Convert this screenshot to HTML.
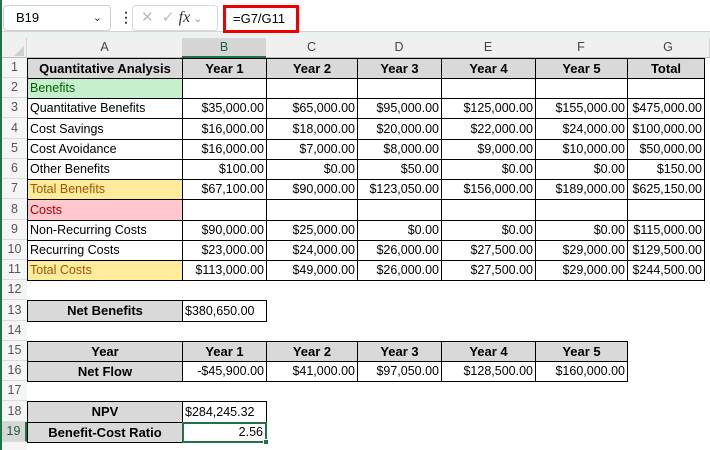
<!DOCTYPE html>
<html><head><meta charset="utf-8"><style>
*{margin:0;padding:0;box-sizing:border-box}
body{width:710px;height:450px;overflow:hidden;background:#fff;font-family:"Liberation Sans",sans-serif;position:relative}
.abs{position:absolute}
.row{position:absolute;left:0;width:710px;height:21px}
.row>div{position:absolute;top:0;height:21px;border:1px solid #000;line-height:19px;font-size:12.5px;padding:0 2px;white-space:nowrap;overflow:hidden;text-align:right;color:#000}
.row>.rh{left:2px;width:25px;border:none;border-bottom:1px solid #dcdcdc;background:#f5f5f5;color:#555;text-align:center;font-size:12.5px;height:20px;padding:0}
.row.t>div{height:22px;line-height:20px}
.row.t>.rh{height:21px}
.a{left:27px;width:156px}.b{left:182px;width:85px}.c{left:266px;width:92px}.d{left:357px;width:85px}.e{left:441px;width:95px}.f{left:535px;width:93px}.g{left:627px;width:78px}
.row>.h{background:#d9d9d9;font-weight:bold;text-align:center;font-size:13px}
.row>.l{text-align:left}
.gr{background:#c6efce;color:#006100!important}
.ye{background:#ffeb9c;color:#9c5700!important}
.pk{background:#ffc7ce;color:#9c0006!important}
.ch{position:absolute;top:38px;height:20px;background:#f0f0f0;border-right:1px solid #d4d4d4;border-bottom:1px solid #bdbdbd;text-align:center;font-size:12.5px;line-height:19px;color:#444}
</style></head><body>
<div class="abs" style="left:0;top:0;width:710px;height:38px;background:#eef1f1"></div>
<div class="abs" style="left:0;top:0;width:710px;height:32px;background:#fff;border-bottom:1px solid #d0d4d4"></div>
<div class="abs" style="left:3px;top:5px;width:108px;height:26px;border:1px solid #d0d0d0;border-radius:4px;font-size:13px;line-height:24px;padding-left:12px">B19<span style="position:absolute;right:8px;top:0;font-size:11px;color:#333">&#8964;</span></div>
<div class="abs" style="left:119px;top:9px;font-size:14px;font-weight:bold;color:#444">&#8942;</div>
<div class="abs" style="left:132px;top:5px;width:86px;height:26px;border:1px solid #d8d8d8;border-radius:4px;font-size:15px;line-height:24px;color:#bbb;padding-left:8px">✕&nbsp;&nbsp;✓&nbsp;<i style="font-family:'Liberation Serif',serif;color:#333;font-size:16px">fx</i><span style="font-size:11px;color:#999"> &#8964;</span></div>
<div class="abs" style="left:223px;top:5px;width:76px;height:28px;border:3px solid #e00;font-size:13px;line-height:22px;padding-left:7px">=G7/G11</div>
<div class="abs" style="left:0;top:0;width:2px;height:450px;background:#217346"></div>
<div class="abs" style="left:2px;top:38px;width:25px;height:20px;background:#f0f0f0;border-bottom:1px solid #bdbdbd;border-right:1px solid #d4d4d4"></div>
<div class="abs" style="left:14px;top:46px;width:0;height:0;border-left:10px solid transparent;border-bottom:10px solid #cfcfcf"></div>
<div class="ch" style="left:27px;width:156px">A</div>
<div class="ch" style="left:182px;width:85px;background:#d6d6d6;border-bottom:2px solid #217346;color:#1e5e3a">B</div>
<div class="ch" style="left:266px;width:92px">C</div>
<div class="ch" style="left:357px;width:85px">D</div>
<div class="ch" style="left:441px;width:95px">E</div>
<div class="ch" style="left:535px;width:93px">F</div>
<div class="ch" style="left:627px;width:83px">G</div>

<div class="row" style="top:58px"><div class="rh">1</div><div class="a h">Quantitative Analysis</div><div class="b h">Year 1</div><div class="c h">Year 2</div><div class="d h">Year 3</div><div class="e h">Year 4</div><div class="f h">Year 5</div><div class="g h">Total</div></div>
<div class="row" style="top:78px"><div class="rh">2</div><div class="a l gr">Benefits</div><div class="b"></div><div class="c"></div><div class="d"></div><div class="e"></div><div class="f"></div><div class="g"></div></div>
<div class="row" style="top:98px"><div class="rh">3</div><div class="a l">Quantitative Benefits</div><div class="b">$35,000.00</div><div class="c">$65,000.00</div><div class="d">$95,000.00</div><div class="e">$125,000.00</div><div class="f">$155,000.00</div><div class="g">$475,000.00</div></div>
<div class="row t" style="top:118px"><div class="rh">4</div><div class="a l">Cost Savings</div><div class="b">$16,000.00</div><div class="c">$18,000.00</div><div class="d">$20,000.00</div><div class="e">$22,000.00</div><div class="f">$24,000.00</div><div class="g">$100,000.00</div></div>
<div class="row" style="top:139px"><div class="rh">5</div><div class="a l">Cost Avoidance</div><div class="b">$16,000.00</div><div class="c">$7,000.00</div><div class="d">$8,000.00</div><div class="e">$9,000.00</div><div class="f">$10,000.00</div><div class="g">$50,000.00</div></div>
<div class="row" style="top:159px"><div class="rh">6</div><div class="a l">Other Benefits</div><div class="b">$100.00</div><div class="c">$0.00</div><div class="d">$50.00</div><div class="e">$0.00</div><div class="f">$0.00</div><div class="g">$150.00</div></div>
<div class="row" style="top:179px"><div class="rh">7</div><div class="a l ye">Total Benefits</div><div class="b">$67,100.00</div><div class="c">$90,000.00</div><div class="d">$123,050.00</div><div class="e">$156,000.00</div><div class="f">$189,000.00</div><div class="g">$625,150.00</div></div>
<div class="row t" style="top:199px"><div class="rh">8</div><div class="a l pk">Costs</div><div class="b"></div><div class="c"></div><div class="d"></div><div class="e"></div><div class="f"></div><div class="g"></div></div>
<div class="row" style="top:220px"><div class="rh">9</div><div class="a l">Non-Recurring Costs</div><div class="b">$90,000.00</div><div class="c">$25,000.00</div><div class="d">$0.00</div><div class="e">$0.00</div><div class="f">$0.00</div><div class="g">$115,000.00</div></div>
<div class="row" style="top:240px"><div class="rh">10</div><div class="a l">Recurring Costs</div><div class="b">$23,000.00</div><div class="c">$24,000.00</div><div class="d">$26,000.00</div><div class="e">$27,500.00</div><div class="f">$29,000.00</div><div class="g">$129,500.00</div></div>
<div class="row" style="top:260px"><div class="rh">11</div><div class="a l ye">Total Costs</div><div class="b">$113,000.00</div><div class="c">$49,000.00</div><div class="d">$26,000.00</div><div class="e">$27,500.00</div><div class="f">$29,000.00</div><div class="g">$244,500.00</div></div>
<div class="row" style="top:280px"><div class="rh">12</div></div>
<div class="row t" style="top:300px"><div class="rh">13</div><div class="a h">Net Benefits</div><div class="b l">$380,650.00</div></div>
<div class="row" style="top:321px"><div class="rh">14</div></div>
<div class="row" style="top:341px"><div class="rh">15</div><div class="a h">Year</div><div class="b h">Year 1</div><div class="c h">Year 2</div><div class="d h">Year 3</div><div class="e h">Year 4</div><div class="f h">Year 5</div></div>
<div class="row" style="top:361px"><div class="rh">16</div><div class="a h">Net Flow</div><div class="b">-$45,900.00</div><div class="c">$41,000.00</div><div class="d">$97,050.00</div><div class="e">$128,500.00</div><div class="f">$160,000.00</div></div>
<div class="row" style="top:381px"><div class="rh">17</div></div>
<div class="row t" style="top:401px"><div class="rh">18</div><div class="a h">NPV</div><div class="b l">$284,245.32</div></div>
<div class="row" style="top:422px"><div class="rh" style="background:#d6d6d6;color:#1e5e3a;border-right:2px solid #217346">19</div><div class="a h">Benefit-Cost Ratio</div><div class="b" style="border:2px solid #217346;line-height:17px">2.56</div></div>
<div class="abs" style="left:263px;top:439px;width:6px;height:6px;background:#217346;border:1px solid #fff"></div>
<div class="abs" style="left:2px;top:442px;width:25px;height:8px;background:#f5f5f5"></div>
</body></html>
